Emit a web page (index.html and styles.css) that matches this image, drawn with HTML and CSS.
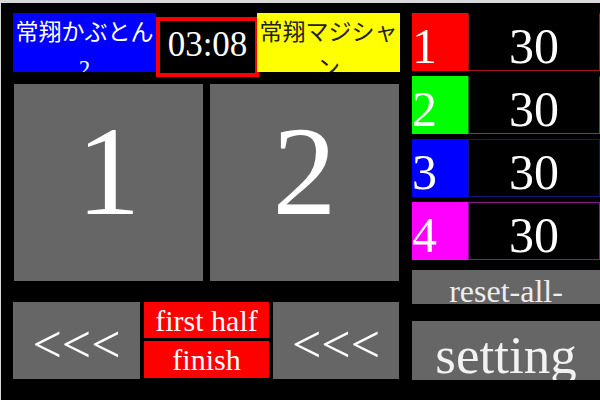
FILE: index.html
```html
<!DOCTYPE html>
<html lang="ja">
<head>
<meta charset="utf-8">
<title>Score Board</title>
<link rel="stylesheet" href="styles.css">
</head>
<body>
<div class="app">
  <div class="left">
    <div class="top">
      <div class="team team-blue">常翔かぶとん2</div>
      <div class="timer">03:08</div>
      <div class="team team-yellow">常翔マジシャン</div>
    </div>
    <div class="panels">
      <div class="panel">1</div>
      <div class="panel">2</div>
    </div>
    <div class="controls">
      <div class="back">&lt;&lt;&lt;</div>
      <div class="half">
        <div class="half-btn">first half</div>
        <div class="half-btn half-finish">finish</div>
      </div>
      <div class="back">&lt;&lt;&lt;</div>
    </div>
  </div>
  <div class="right">
    <div class="scores">
      <div class="score score-red"><div class="num">1</div><div class="val">30</div></div>
      <div class="score score-green"><div class="num">2</div><div class="val">30</div></div>
      <div class="score score-blue"><div class="num">3</div><div class="val">30</div></div>
      <div class="score score-magenta"><div class="num">4</div><div class="val">30</div></div>
    </div>
    <div class="reset">reset-all-</div>
    <div class="setting">setting</div>
  </div>
</div>
</body>
</html>
```

FILE: styles.css
```css
html {
  background: #d9d9d9;
}
body {
  margin: 0;
  width: 600px;
  height: 400px;
  overflow: hidden;
  font-family: "Liberation Serif", "Noto Sans CJK JP", serif;
}
.app {
  box-sizing: border-box;
  margin: 3px 0 0 1px;
  width: 599px;
  height: 397px;
  background: #000;
  padding: 10px 0 0 12px;
  display: flex;
  gap: 12px;
  overflow: hidden;
  color: #fff;
}
.left {
  width: 387px;
  flex: none;
  display: flex;
  flex-direction: column;
}
.top {
  display: flex;
  align-items: flex-start;
  height: 59px;
}
.team {
  box-sizing: border-box;
  width: 143px;
  height: 59px;
  flex: none;
  overflow: hidden;
  font-size: 23px;
  line-height: 36px;
  padding-top: 2px;
  text-align: center;
  word-break: break-all;
}
.team-blue {
  background: #0000ff;
  color: #fff;
}
.team-yellow {
  background: #ffff00;
  color: #222;
}
.timer {
  box-sizing: border-box;
  width: 103px;
  height: 60px;
  margin: 4px -2px 0 0;
  flex: none;
  border: 4px solid #ff0000;
  background: #000;
  font-size: 35px;
  line-height: 48px;
  text-align: center;
}
.panels {
  margin: 12px 0 0 1px;
  display: grid;
  grid-template-columns: 189px 189px;
  gap: 7px;
  height: 197px;
}
.panel {
  box-sizing: border-box;
  background: #666;
  font-size: 128px;
  line-height: 175px;
  padding-bottom: 22px;
  text-align: center;
  overflow: hidden;
}
.controls {
  margin-top: 21px;
  display: grid;
  grid-template-columns: 127px 125px 126px;
  gap: 4px;
  height: 77px;
}
.back {
  box-sizing: border-box;
  background: #666;
  font-size: 52px;
  line-height: 77px;
  padding-top: 4px;
  text-align: center;
  overflow: hidden;
}
.half {
  display: flex;
  flex-direction: column;
  gap: 3px;
}
.half-btn {
  box-sizing: border-box;
  background: #ff0000;
  height: 36px;
  font-size: 30px;
  line-height: 34px;
  padding-top: 2px;
  text-align: center;
  overflow: hidden;
}
.half-finish {
  height: 37px;
  line-height: 37px;
  padding-top: 0;
}
.right {
  width: 188px;
  flex: none;
  display: flex;
  flex-direction: column;
}
.scores {
  display: flex;
  flex-direction: column;
  gap: 5px;
}
.score {
  display: flex;
  height: 58px;
}
.num {
  box-sizing: border-box;
  width: 56px;
  flex: none;
  font-size: 50px;
  line-height: 50px;
  padding-top: 8px;
  overflow: hidden;
}
.val {
  box-sizing: border-box;
  flex: 1;
  border: 1px solid;
  font-size: 50px;
  line-height: 50px;
  padding-top: 7px;
  text-align: center;
  overflow: hidden;
}
.score-red .num { background: #ff0000; }
.score-red .val { border-color: #a01818; border-top-color: #000; }
.score-green .num { background: #00ff00; }
.score-green .val { border-color: #167a16; border-top-color: #000; }
.score-blue .num { background: #0000ff; }
.score-blue .val { border-color: #14147a; }
.score-magenta .num { background: #ff00ff; }
.score-magenta .val { border-color: #8a168a; }
.reset {
  box-sizing: border-box;
  margin-top: 10px;
  height: 34px;
  background: #666;
  color: #eee;
  font-size: 32px;
  line-height: 34px;
  padding-top: 4px;
  text-align: center;
  overflow: hidden;
}
.setting {
  box-sizing: border-box;
  margin-top: 17px;
  height: 59px;
  background: #666;
  color: #f2f2f2;
  font-size: 53px;
  line-height: 59px;
  padding-top: 5px;
  text-align: center;
  overflow: hidden;
}
```
